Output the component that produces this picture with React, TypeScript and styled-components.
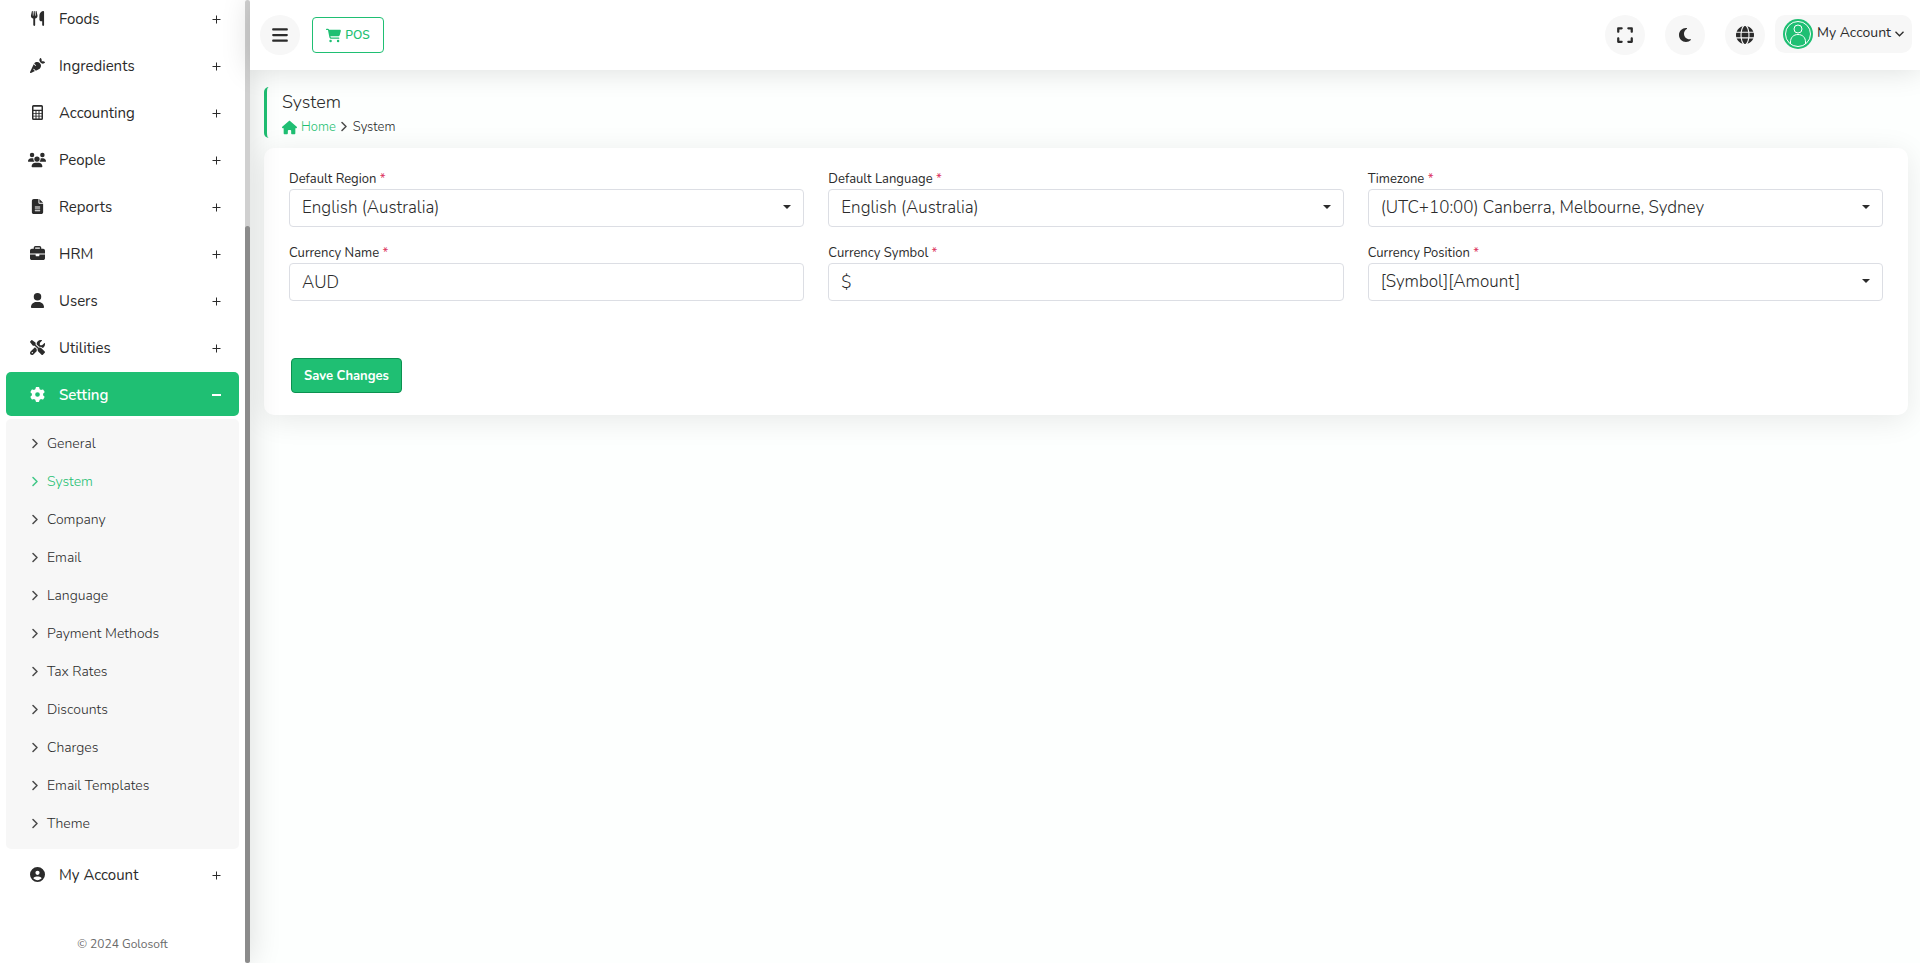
import React from "react";
import styled, { createGlobalStyle, css } from "styled-components";
import {
  FaUtensils, FaCarrot, FaUsers, FaFileLines, FaBriefcase, FaUser,
  FaScrewdriverWrench, FaGear, FaCircleUser, FaCartShopping, FaHouse, FaExpand,
  FaMoon, FaGlobe, FaBars,
} from "react-icons/fa6";

const green = "#1fbf73";
const ink = "#2b2b2b";

const GlobalStyle = createGlobalStyle`
  *, *::before, *::after { box-sizing: border-box; }
  body {
    margin: 0;
    background: #fdfffe;
    color: ${ink};
    font-family: Nunito, "Noto Sans", "Open Sans", sans-serif;
    font-size: 14px;
    line-height: 20px;
  }
  button, input, select { font: inherit; color: inherit; }
  a { color: inherit; text-decoration: none; }
  svg { display: block; flex: none; }
`;

const Shell = styled.div`
  display: flex;
  min-height: 100vh;
`;

const Sidebar = styled.aside`
  position: sticky;
  top: 0;
  z-index: 1;
  display: flex;
  flex: none;
  width: 250px;
  height: 100vh;
  background: #fff;
  box-shadow: 0 0 30px rgba(0, 0, 0, 0.14);
`;

const SidebarBody = styled.div`
  display: flex;
  flex: 1;
  flex-direction: column;
  justify-content: flex-end;
  overflow: hidden;
`;

const ScrollTrack = styled.div`
  display: flex;
  flex-direction: column;
  justify-content: flex-end;
  width: 5px;
  border-radius: 5px;
  background: #d0d0d0;
`;

const ScrollThumb = styled.div`
  height: 76.5%;
  border-radius: 5px;
  background: #8b8b8b;
`;

const Menu = styled.nav`
  display: flex;
  flex-direction: column;
  gap: 3px;
  padding: 0 6px;
`;

const MenuItem = styled.button<{ $active?: boolean }>`
  display: grid;
  grid-template-columns: 18px 1fr 9px;
  align-items: center;
  gap: 13px;
  height: 44px;
  padding: 2px 18px 0 22px;
  border: 0;
  border-radius: 5px;
  background: transparent;
  font-size: 15px;
  text-align: left;
  cursor: pointer;
  ${(p) => p.$active && css`
    background: ${green};
    color: #fff;
    font-weight: 600;
  `}
`;

const IconSlot = styled.span`
  display: flex;
  justify-content: center;
  padding-bottom: 1px;
`;

const SubMenu = styled.div`
  display: flex;
  flex-direction: column;
  padding: 6px 0;
  border-radius: 5px;
  background: #f7f7f7;
`;

const SubItem = styled.a<{ $active?: boolean }>`
  display: flex;
  align-items: center;
  gap: 8px;
  height: 38px;
  padding-left: 26px;
  font-size: 14px;
  font-weight: 300;
  color: ${(p) => (p.$active ? green : ink)};
`;

const Copyright = styled.footer`
  padding: 38px 0 9px;
  font-size: 12px;
  color: #6a6a6a;
  text-align: center;
`;

const Main = styled.div`
  flex: 1;
  min-width: 0;
`;

const Header = styled.header`
  position: relative;
  z-index: 2;
  display: flex;
  align-items: center;
  gap: 12px;
  height: 70px;
  padding: 0 8px 0 10px;
  background: #fff;
  box-shadow: 0 0 30px rgba(0, 0, 0, 0.14);
`;

const RoundButton = styled.button`
  display: flex;
  align-items: center;
  justify-content: center;
  width: 40px;
  height: 40px;
  padding: 0;
  border: 0;
  border-radius: 50%;
  background: #f7f7f7;
  cursor: pointer;
`;

const PosButton = styled.button`
  display: flex;
  align-items: center;
  justify-content: center;
  gap: 4px;
  width: 72px;
  height: 36px;
  padding: 0;
  border: 1px solid ${green};
  border-radius: 4px;
  background: #fff;
  color: ${green};
  font-size: 12px;
  font-weight: 600;
  cursor: pointer;
`;

const Tools = styled.div`
  display: flex;
  gap: 20px;
  margin-left: auto;
`;

const AccountButton = styled.button`
  display: flex;
  align-items: center;
  gap: 4px;
  height: 38px;
  margin: 0 0 2px -2px;
  padding: 0 8px;
  border: 0;
  border-radius: 10px;
  background: #f7f7f7;
  cursor: pointer;
`;

const AccountName = styled.span`
  padding-bottom: 3px;
`;

const Content = styled.main`
  display: flex;
  flex-direction: column;
  gap: 10px;
  padding: 17px 12px 20px 14px;
`;

const PageTitle = styled.div`
  height: 51px;
  padding: 4px 0 0 15px;
  border-left: 3px solid ${green};
  border-radius: 5px;
  background: #fdfffe;
`;

const Heading = styled.h1`
  margin: 0;
  font-size: 18px;
  font-weight: 300;
  line-height: 22px;
`;

const Crumbs = styled.nav`
  display: flex;
  align-items: center;
  gap: 5px;
  padding-top: 4px;
  font-size: 13px;
  font-weight: 300;
`;

const HomeLink = styled.a`
  display: flex;
  align-items: center;
  gap: 4px;
  color: ${green};
`;

const Card = styled.form`
  padding: 21px 25px 22px;
  border-radius: 10px;
  background: #fff;
  box-shadow: 0 5px 30px rgba(0, 0, 0, 0.09);
`;

const Fields = styled.div`
  display: grid;
  grid-template-columns: repeat(3, 1fr);
  gap: 16px 24px;
`;

const Field = styled.div`
  display: flex;
  flex-direction: column;
`;

const Label = styled.label`
  height: 20px;
  font-size: 13px;
`;

const Required = styled.span`
  color: #dc3560;
`;

const controlStyle = css`
  width: 100%;
  height: 38px;
  padding: 0 12px;
  border: 1px solid #dcdee4;
  border-radius: 4px;
  outline: 0;
  background: #fff;
  font-size: 17px;
  font-weight: 300;
`;

const Input = styled.input`
  ${controlStyle}
`;

const SelectWrap = styled.div`
  display: grid;
  align-items: center;
  > * { grid-area: 1 / 1; }
  > svg { justify-self: end; margin: 0 13px 2px; pointer-events: none; }
`;

const Select = styled.select`
  ${controlStyle}
  appearance: none;
`;

const SaveButton = styled.button`
  height: 35px;
  margin: 57px 0 0 2px;
  padding: 0 12px;
  border: 1px solid #0b9150;
  border-radius: 4px;
  background: ${green};
  color: #fff;
  font-size: 13px;
  font-weight: 700;
  cursor: pointer;
`;

const Chevron = () => (
  <svg
    width="7" height="12" viewBox="0 0 7 12" fill="none" stroke="currentColor"
    strokeWidth="1.500" strokeLinecap="round" strokeLinejoin="round" opacity="0.85"
  >
    <path d="M1 1.500l4 4l-4 4" />
  </svg>
);

const Sign = ({ minus }: { minus?: boolean }) => (
  <svg width="9" height="9" viewBox="0 0 9 9" stroke="currentColor" strokeWidth={minus ? 2 : 1}>
    <path d={minus ? "M0 4h9" : "M.5 4.500h8M4.500 .5v8"} />
  </svg>
);

const Calculator = ({ size }: { size: number }) => (
  <svg width={size} height={size} viewBox="0 0 15 15" fill="currentColor">
    <path
      fillRule="evenodd"
      d="M3.500 0h8A1.500 1.500 0 0 1 13 1.500v12a1.500 1.500 0 0 1-1.500 1.500h-8A1.500 1.500 0 0 1 2 13.500v-12A1.500 1.500 0 0 1 3.500 0zM3.500 1.800v3h8V1.800zM3.500 6v2h2V6zM6.500 6v2h2V6zM9.500 6v2h2V6zM3.500 8.800v2h2v-2zM6.500 8.800v2h2v-2zM9.500 8.800v2h2v-2zM3.500 11.600v2h2v-2zM6.500 11.600v2h2v-2zM9.500 11.600v2h2v-2z"
    />
  </svg>
);

const Avatar = () => (
  <svg width="30" height="30" viewBox="0 0 30 30" fill="none" stroke="#fff">
    <circle cx="15" cy="15" r="15" fill={green} stroke="none" />
    <circle cx="15" cy="15" r="12.5" />
    <circle cx="15" cy="10" r="4" />
    <path d="M7.500 25v-2c0-4.500 3-7.500 7.500-7.500s7.500 3 7.500 7.500v2" />
  </svg>
);

const topItems = [
  { label: "Foods", Icon: FaUtensils },
  { label: "Ingredients", Icon: FaCarrot },
  { label: "Accounting", Icon: Calculator },
  { label: "People", Icon: FaUsers, size: 18 },
  { label: "Reports", Icon: FaFileLines },
  { label: "HRM", Icon: FaBriefcase },
  { label: "Users", Icon: FaUser },
  { label: "Utilities", Icon: FaScrewdriverWrench },
];

const settings = [
  "General", "System", "Company", "Email", "Language", "Payment Methods",
  "Tax Rates", "Discounts", "Charges", "Email Templates", "Theme",
];

const fields = [
  { id: "region", label: "Default Region", value: "English (Australia)", select: true },
  { id: "language", label: "Default Language", value: "English (Australia)", select: true },
  { id: "timezone", label: "Timezone", value: "(UTC+10:00) Canberra, Melbourne, Sydney", select: true },
  { id: "currency", label: "Currency Name", value: "AUD" },
  { id: "symbol", label: "Currency Symbol", value: "$" },
  { id: "position", label: "Currency Position", value: "[Symbol][Amount]", select: true },
];

export default function App() {
  return (
    <>
      <GlobalStyle />
      <Shell>
        <Sidebar>
          <SidebarBody>
            <Menu>
              {topItems.map(({ label, Icon, size }) => (
                <MenuItem key={label} type="button">
                  <IconSlot><Icon size={size ?? 15} /></IconSlot>
                  {label}
                  <Sign />
                </MenuItem>
              ))}
              <MenuItem type="button" $active>
                <IconSlot><FaGear size={15} /></IconSlot>
                Setting
                <Sign minus />
              </MenuItem>
              <SubMenu>
                {settings.map((name) => (
                  <SubItem key={name} href="#" $active={name === "System"}>
                    <Chevron />
                    {name}
                  </SubItem>
                ))}
              </SubMenu>
              <MenuItem type="button">
                <IconSlot><FaCircleUser size={15} /></IconSlot>
                My Account
                <Sign />
              </MenuItem>
            </Menu>
            <Copyright>© 2024 Golosoft</Copyright>
          </SidebarBody>
          <ScrollTrack><ScrollThumb /></ScrollTrack>
        </Sidebar>
        <Main>
          <Header>
            <RoundButton type="button" aria-label="Menu"><FaBars size={18} /></RoundButton>
            <PosButton type="button"><FaCartShopping size={15} />POS</PosButton>
            <Tools>
              <RoundButton type="button" aria-label="Full screen"><FaExpand size={18} /></RoundButton>
              <RoundButton type="button" aria-label="Dark mode"><FaMoon size={16} /></RoundButton>
              <RoundButton type="button" aria-label="Language"><FaGlobe size={18} /></RoundButton>
            </Tools>
            <AccountButton type="button">
              <Avatar />
              <AccountName>My Account</AccountName>
              <svg width="9" height="6" viewBox="0 0 9 6" fill="none" stroke="currentColor" strokeWidth="1.300"><path d="M.5 .8l4 4l4-4" /></svg>
            </AccountButton>
          </Header>
          <Content>
            <PageTitle>
              <Heading>System</Heading>
              <Crumbs aria-label="Breadcrumb">
                <HomeLink href="#"><FaHouse size={15} />Home</HomeLink>
                <Chevron />
                System
              </Crumbs>
            </PageTitle>
            <Card>
              <Fields>
                {fields.map((f) => (
                  <Field key={f.id}>
                    <Label htmlFor={f.id}>{f.label} <Required>*</Required></Label>
                    {f.select ? (
                      <SelectWrap>
                        <Select id={f.id} defaultValue={f.value}><option>{f.value}</option></Select>
                        <svg width="8" height="4" viewBox="0 0 8 4" fill="currentColor"><path d="M0 0h8L4 4z" /></svg>
                      </SelectWrap>
                    ) : (
                      <Input id={f.id} defaultValue={f.value} />
                    )}
                  </Field>
                ))}
              </Fields>
              <SaveButton type="button">Save Changes</SaveButton>
            </Card>
          </Content>
        </Main>
      </Shell>
    </>
  );
}
